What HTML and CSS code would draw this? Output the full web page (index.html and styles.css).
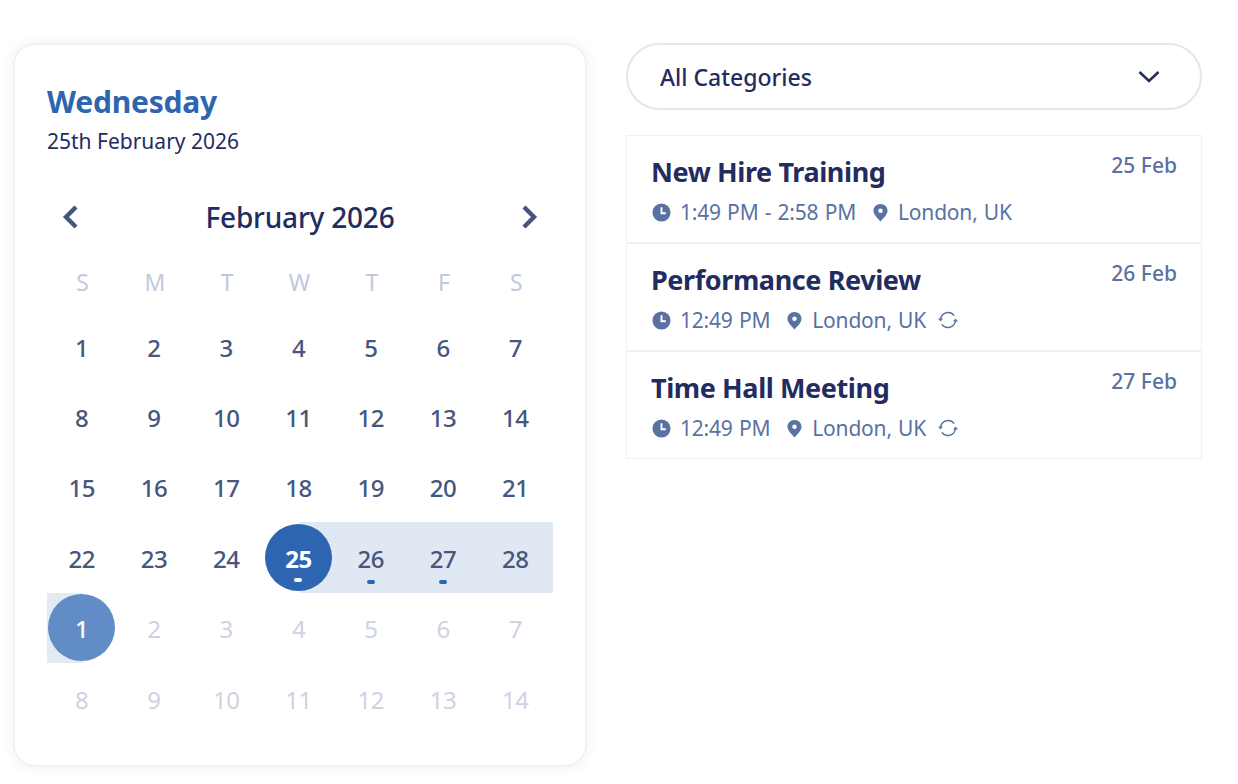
FILE: index.html
```html
<!DOCTYPE html>
<html lang="en">
<head>
<meta charset="UTF-8" />
<meta name="viewport" content="width=device-width, initial-scale=1" />
<title>Events Calendar</title>
<link rel="stylesheet" href="styles.css">
</head>
<body>

<div class="page">
  <section class="calendar-card">
    <h1 class="day-name">Wednesday</h1>
    <p class="full-date">25th February 2026</p>

    <div class="month-nav">
      <svg class="nav-arrow" viewBox="0 0 18 26"><path d="M15 3 L5 13 L15 23" /></svg>
      <span class="month-title">February 2026</span>
      <svg class="nav-arrow" viewBox="0 0 18 26"><path d="M3 3 L13 13 L3 23" /></svg>
    </div>

    <div class="week-head">
      <span>S</span><span>M</span><span>T</span><span>W</span><span>T</span><span>F</span><span>S</span>
    </div>

    <div class="days">
      <div class="day">1</div><div class="day">2</div><div class="day">3</div><div class="day">4</div><div class="day">5</div><div class="day">6</div><div class="day">7</div>
      <div class="day">8</div><div class="day">9</div><div class="day">10</div><div class="day">11</div><div class="day">12</div><div class="day">13</div><div class="day">14</div>
      <div class="day">15</div><div class="day">16</div><div class="day">17</div><div class="day">18</div><div class="day">19</div><div class="day">20</div><div class="day">21</div>
      <div class="day">22</div><div class="day">23</div><div class="day">24</div>
      <div class="day range-start selected"><span class="circle">25<i class="mark"></i></span></div>
      <div class="day in-range">26<i class="mark"></i></div>
      <div class="day in-range">27<i class="mark"></i></div>
      <div class="day in-range">28</div>
      <div class="day range-end"><span class="circle">1</span></div>
      <div class="day muted">2</div><div class="day muted">3</div><div class="day muted">4</div><div class="day muted">5</div><div class="day muted">6</div><div class="day muted">7</div>
      <div class="day muted">8</div><div class="day muted">9</div><div class="day muted">10</div><div class="day muted">11</div><div class="day muted">12</div><div class="day muted">13</div><div class="day muted">14</div>
    </div>
  </section>

  <section class="events">
    <div class="category-select">
      <span>All Categories</span>
      <svg class="select-arrow" viewBox="0 0 22 14"><path d="M1.5 2 L11 11 L20.5 2" /></svg>
    </div>

    <div class="event-list">
      <div class="event">
        <div class="event-top">
          <h2>New Hire Training</h2>
          <span class="event-date">25 Feb</span>
        </div>
        <div class="event-meta">
          <svg class="ico" viewBox="0 0 20 20"><circle cx="10" cy="10" r="9.5" /><path class="hand" d="M10 4.5 V10.8 H14.5" /></svg>
          <span class="meta-text">1:49 PM - 2:58 PM</span>
          <svg class="ico pin" viewBox="0 0 20 20"><path fill-rule="evenodd" d="M10 1 C5.6 1 2.6 4.2 2.6 8.2 C2.6 12.6 7.8 16.8 10 19.4 C12.2 16.8 17.4 12.6 17.4 8.2 C17.4 4.2 14.4 1 10 1 Z M10 5.8 A2.4 2.4 0 1 1 10 10.6 A2.4 2.4 0 1 1 10 5.8 Z" /></svg>
          <span class="meta-text">London, UK</span>
        </div>
      </div>

      <div class="event">
        <div class="event-top">
          <h2>Performance Review</h2>
          <span class="event-date">26 Feb</span>
        </div>
        <div class="event-meta">
          <svg class="ico" viewBox="0 0 20 20"><circle cx="10" cy="10" r="9.5" /><path class="hand" d="M10 4.5 V10.8 H14.5" /></svg>
          <span class="meta-text">12:49 PM</span>
          <svg class="ico pin" viewBox="0 0 20 20"><path fill-rule="evenodd" d="M10 1 C5.6 1 2.6 4.2 2.6 8.2 C2.6 12.6 7.8 16.8 10 19.4 C12.2 16.8 17.4 12.6 17.4 8.2 C17.4 4.2 14.4 1 10 1 Z M10 5.8 A2.4 2.4 0 1 1 10 10.6 A2.4 2.4 0 1 1 10 5.8 Z" /></svg>
          <span class="meta-text">London, UK</span>
          <svg class="repeat" viewBox="0 0 20 20"><path d="M2.6 9 A7.6 7.6 0 0 1 16.2 5.6" /><path d="M17.4 11 A7.6 7.6 0 0 1 3.8 14.4" /><path class="tip" d="M0 8.6 H5 L2.5 11.6 Z M15 11.4 H20 L17.5 8.4 Z" /></svg>
        </div>
      </div>

      <div class="event">
        <div class="event-top">
          <h2>Time Hall Meeting</h2>
          <span class="event-date">27 Feb</span>
        </div>
        <div class="event-meta">
          <svg class="ico" viewBox="0 0 20 20"><circle cx="10" cy="10" r="9.5" /><path class="hand" d="M10 4.5 V10.8 H14.5" /></svg>
          <span class="meta-text">12:49 PM</span>
          <svg class="ico pin" viewBox="0 0 20 20"><path fill-rule="evenodd" d="M10 1 C5.6 1 2.6 4.2 2.6 8.2 C2.6 12.6 7.8 16.8 10 19.4 C12.2 16.8 17.4 12.6 17.4 8.2 C17.4 4.2 14.4 1 10 1 Z M10 5.8 A2.4 2.4 0 1 1 10 10.6 A2.4 2.4 0 1 1 10 5.8 Z" /></svg>
          <span class="meta-text">London, UK</span>
          <svg class="repeat" viewBox="0 0 20 20"><path d="M2.6 9 A7.6 7.6 0 0 1 16.2 5.6" /><path d="M17.4 11 A7.6 7.6 0 0 1 3.8 14.4" /><path class="tip" d="M0 8.6 H5 L2.5 11.6 Z M15 11.4 H20 L17.5 8.4 Z" /></svg>
        </div>
      </div>
    </div>
  </section>
</div>

</body>
</html>
```

FILE: styles.css
```css
html, body {
  margin: 0;
  height: 784px;
  overflow: hidden;
  background: #fff;
}
body {
  font-family: "Noto Sans", "Open Sans", sans-serif;
  color: #232c5f;
}
.page {
  display: flex;
  gap: 39px;
  padding: 43px 36px 0 13px;
  align-items: flex-start;
}

/* calendar */
.calendar-card {
  box-sizing: border-box;
  width: 574px;
  height: 724px;
  padding: 35px 32px 0;
  border: 2px solid #f0f1f7;
  border-radius: 22px;
  box-shadow: 0 0 14px rgba(40, 50, 110, 0.07);
}
.day-name {
  margin: 0;
  font-size: 30px;
  line-height: 44px;
  font-weight: 700;
  color: #2e65b0;
  letter-spacing: -0.2px;
}
.full-date {
  margin: 0;
  font-size: 21px;
  line-height: 35px;
}
.month-nav {
  display: flex;
  justify-content: space-between;
  align-items: center;
  margin-top: 33px;
  padding: 0 14px;
  height: 50px;
}
.month-title {
  font-size: 28px;
  font-weight: 500;
  letter-spacing: -0.2px;
}
.nav-arrow {
  width: 18px;
  height: 26px;
  fill: none;
  stroke: #47567d;
  stroke-width: 4.4;
}
.week-head, .days {
  display: grid;
  grid-template-columns: repeat(7, 1fr);
}
.week-head {
  height: 50px;
  margin-top: 15px;
  align-items: center;
  text-align: center;
  font-size: 23px;
  color: #c1c9dc;
}
.week-head span {
  padding-right: 1px;
}
.days {
  grid-auto-rows: 70.4px;
  margin-top: 4px;
}
.day {
  position: relative;
  box-sizing: border-box;
  display: flex;
  align-items: center;
  justify-content: center;
  padding: 2px 3px 0 0;
  font-size: 24px;
  font-weight: 500;
  letter-spacing: -0.5px;
  color: #47567d;
}
.muted {
  color: #cdd3e3;
  font-weight: 400;
}
.in-range {
  background: #e0e8f3;
}
.range-start {
  background: linear-gradient(to right, transparent 50%, #e0e8f3 50%);
}
.range-end {
  background: linear-gradient(to right, #e4eaf4 50%, transparent 50%);
}
.circle {
  position: relative;
  box-sizing: border-box;
  display: flex;
  align-items: center;
  justify-content: center;
  flex: none;
  width: 67px;
  height: 67px;
  margin-top: -2px;
  padding-top: 2px;
  border-radius: 50%;
  color: #fff;
  font-weight: 700;
}
.selected .circle {
  background: #2e65b0;
}
.range-end .circle {
  background: #628cc5;
  font-weight: 500;
}
.mark {
  position: absolute;
  left: calc(50% - 1.5px);
  bottom: 9px;
  width: 8px;
  height: 4px;
  margin-left: -4px;
  border-radius: 2px;
  background: #2e65b0;
}
.selected .mark {
  left: 50%;
  background: #fff;
}

/* right column */
.events {
  width: 576px;
}
.category-select {
  box-sizing: border-box;
  display: flex;
  align-items: center;
  justify-content: space-between;
  height: 67px;
  padding: 0 40px 0 32px;
  border: 2px solid #e6e6e9;
  border-radius: 34px;
  font-size: 23px;
  font-weight: 500;
}
.select-arrow {
  width: 22px;
  height: 14px;
  fill: none;
  stroke: #232c5f;
  stroke-width: 2.6;
}
.event-list {
  margin-top: 25px;
  border: 1px solid #f0f1f5;
}
.event {
  box-sizing: border-box;
  height: 108px;
  padding: 16px 24px 0;
  border-bottom: 2px solid #f0f1f5;
}
.event:last-child {
  height: 106px;
  border-bottom: 0;
}
.event-top {
  display: flex;
  justify-content: space-between;
  align-items: flex-start;
}
.event h2 {
  margin: 0;
  font-size: 27px;
  line-height: 40px;
  font-weight: 700;
  letter-spacing: -0.4px;
}
.event-date {
  font-size: 21px;
  line-height: 26px;
  font-weight: 500;
  color: #5a71a3;
}
.event-meta {
  display: flex;
  align-items: center;
  margin-top: 5px;
  font-size: 21px;
  line-height: 30px;
  color: #5a71a3;
  letter-spacing: -0.2px;
  word-spacing: 1px;
}
.ico {
  width: 19px;
  height: 19px;
  margin: 0 9px 0 1px;
  fill: #5a71a3;
}
.ico .hand {
  fill: none;
  stroke: #fff;
  stroke-width: 2;
}
.ico.pin {
  margin: 0 8px 0 15px;
}
.repeat {
  width: 20px;
  height: 20px;
  margin-left: 12px;
  fill: none;
  stroke: #5a71a3;
  stroke-width: 1.5;
}
.repeat .tip {
  fill: #5a71a3;
  stroke: none;
}
```
